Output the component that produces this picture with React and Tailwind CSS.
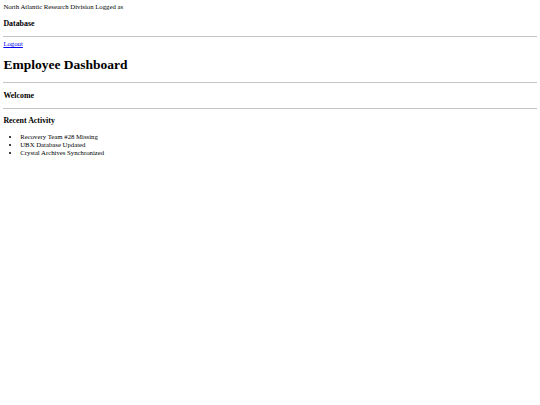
export default function App() {
  return (
    <div className="min-h-screen bg-white p-[3.375px] font-['Liberation_Serif',serif] text-[6.75px] leading-[1.15] text-black">
      {/* Header */}
      <div>North Atlantic Research Division Logged as</div>
      <h3 className="my-[7.9px] text-[7.9px] font-bold">Database</h3>
      <hr className="my-[3.375px] border-t border-[#c4c4c4]" />
      <a href="#" className="text-[#0000ee] underline">
        Logout
      </a>

      {/* Main */}
      <h1 className="my-[9.05px] text-[13.5px] font-bold">Employee Dashboard</h1>
      <hr className="my-[3.375px] border-t border-[#c4c4c4]" />
      <h3 className="my-[7.9px] text-[7.9px] font-bold">Welcome</h3>
      <hr className="my-[3.375px] border-t border-[#c4c4c4]" />
      <h3 className="my-[7.9px] text-[7.9px] font-bold">Recent Activity</h3>
      <ul className="my-[6.75px] list-disc pl-[16.875px]">
        <li>Recovery Team #28 Missing</li>
        <li>UBX Database Updated</li>
        <li>Crystal Archives Synchronized</li>
      </ul>
    </div>
  );
}
